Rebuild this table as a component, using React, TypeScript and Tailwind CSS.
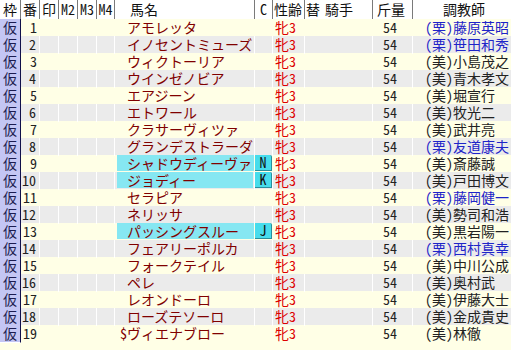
type Row = {
  no: number;
  name: string;
  mark?: string;
  c?: string;
  stable: '栗' | '美';
  trainer: string;
};

const rows: Row[] = [
  { no: 1, name: 'アモレッタ', stable: '栗', trainer: '藤原英昭' },
  { no: 2, name: 'イノセントミューズ', stable: '栗', trainer: '笹田和秀' },
  { no: 3, name: 'ウィクトーリア', stable: '美', trainer: '小島茂之' },
  { no: 4, name: 'ウインゼノビア', stable: '美', trainer: '青木孝文' },
  { no: 5, name: 'エアジーン', stable: '美', trainer: '堀宣行' },
  { no: 6, name: 'エトワール', stable: '美', trainer: '牧光二' },
  { no: 7, name: 'クラサーヴィツァ', stable: '美', trainer: '武井亮' },
  { no: 8, name: 'グランデストラーダ', stable: '栗', trainer: '友道康夫' },
  { no: 9, name: 'シャドウディーヴァ', c: 'N', stable: '美', trainer: '斎藤誠' },
  { no: 10, name: 'ジョディー', c: 'K', stable: '美', trainer: '戸田博文' },
  { no: 11, name: 'セラピア', stable: '栗', trainer: '藤岡健一' },
  { no: 12, name: 'ネリッサ', stable: '美', trainer: '勢司和浩' },
  { no: 13, name: 'パッシングスルー', c: 'J', stable: '美', trainer: '黒岩陽一' },
  { no: 14, name: 'フェアリーポルカ', stable: '栗', trainer: '西村真幸' },
  { no: 15, name: 'フォークテイル', stable: '美', trainer: '中川公成' },
  { no: 16, name: 'ペレ', stable: '美', trainer: '奥村武' },
  { no: 17, name: 'レオンドーロ', stable: '美', trainer: '伊藤大士' },
  { no: 18, name: 'ローズテソーロ', stable: '美', trainer: '金成貴史' },
  { no: 19, name: 'ヴィエナブロー', mark: '$', stable: '美', trainer: '林徹' },
];

// 列幅: 枠 番 印 M2 M3 M4 馬名 C 性齢 替 騎手 斤量 調教師
const cols = 'grid grid-cols-[21px_19px_19px_19px_19px_18px_140px_18px_32px_17px_51px_40px_98px]';

function HeaderCell({ children, divider = true, className = '' }: { children?: React.ReactNode; divider?: boolean; className?: string }) {
  return (
    <div className={`h-[19px] leading-[19px] ${divider ? 'border-r border-[#7a7a7a]' : ''} ${className}`}>
      {children}
    </div>
  );
}

function RowItem({ row }: { row: Row }) {
  const grey = row.no % 2 === 0;
  const sep = grey ? 'border-r border-white' : '';
  const highlighted = !!row.c;

  return (
    <div className={`${cols} h-[17px] leading-[17px] ${grey ? 'bg-[#ebebeb]' : 'bg-[#ffffe6]'}`}>
      {/* 枠 */}
      <div className="bg-[#c4c6f4] border-r border-[#10104a] border-b border-b-white text-center text-[#1c1c50]">仮</div>
      {/* 番 */}
      <div className={`text-right pr-[3px] text-[#222] ${sep}`}>{row.no}</div>
      <div className={sep} />
      <div className={sep} />
      <div className={sep} />
      <div className={sep} />
      {/* 馬名 */}
      <div className={`flex ${sep}`}>
        <div
          className={`flex w-full ml-[2px] mr-[1px] h-[16px] leading-[16px] ${highlighted ? 'bg-[#86e7f2]' : ''}`}
        >
          <span className="w-[10px] text-right text-[#800000]">{row.mark}</span>
          <span className="text-[#800000]">{row.name}</span>
        </div>
      </div>
      {/* C */}
      <div className={`flex items-start ${sep}`}>
        {row.c && (
          <div className="w-[17px] h-[16px] leading-[15px] text-center bg-[#46dcec] border-r border-b border-[#2a8f9c] text-[#111] rounded-tr-[2px]">
            {row.c}
          </div>
        )}
      </div>
      {/* 性齢 */}
      <div className={`pl-[2px] text-[#dd0000] ${sep}`}>牝3</div>
      {/* 替 */}
      <div />
      {/* 騎手 */}
      <div className={sep} />
      {/* 斤量 */}
      <div className={`pl-[10px] text-[#222] ${sep}`}>54</div>
      {/* 調教師 */}
      <div className={`pl-[12px] whitespace-nowrap ${row.stable === '栗' ? 'text-[#1e24c8]' : 'text-[#222]'}`}>
        ({row.stable}){row.trainer}
      </div>
    </div>
  );
}

export default function App() {
  return (
    <div
      className="w-[511px] h-[350px] overflow-hidden bg-[#ffffe6] text-[14px] [font-feature-settings:'hwid'] text-black"
      style={{ fontFamily: '"Noto Sans CJK JP", "Noto Sans", sans-serif' }}
    >
      <div className={`${cols} bg-white text-[#111]`}>
        <HeaderCell className="text-center">枠</HeaderCell>
        <HeaderCell className="text-center">番</HeaderCell>
        <HeaderCell className="text-center">印</HeaderCell>
        <HeaderCell className="text-center">M2</HeaderCell>
        <HeaderCell className="text-center">M3</HeaderCell>
        <HeaderCell className="text-center">M4</HeaderCell>
        <HeaderCell className="pl-[15px]">馬名</HeaderCell>
        <HeaderCell className="text-center">C</HeaderCell>
        <HeaderCell className="pl-[1px]">性齢</HeaderCell>
        <HeaderCell divider={false} className="pl-[1px]">替</HeaderCell>
        <HeaderCell className="pl-[3px]">騎手</HeaderCell>
        <HeaderCell className="pl-[4px]">斤量</HeaderCell>
        <HeaderCell divider={false} className="pl-[30px]">調教師</HeaderCell>
      </div>
      {rows.map((row) => (
        <RowItem key={row.no} row={row} />
      ))}
    </div>
  );
}
